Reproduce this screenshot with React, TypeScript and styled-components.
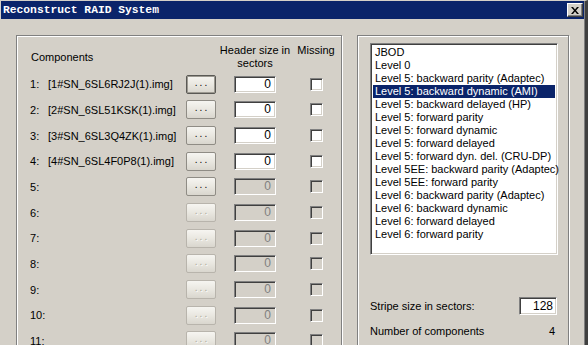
import React from "react"
import styled, { createGlobalStyle, css } from "styled-components"

const GlobalStyle = createGlobalStyle`
  html, body {
    margin: 0;
    padding: 0;
    background: #d4d0c8;
    overflow: hidden;
  }
  body {
    font-family: "Liberation Sans", Arial, sans-serif;
    font-size: 11px;
    color: #000;
  }
`

const sunken = css`
  border: 1px solid;
  border-color: #808080 #fff #fff #808080;
  box-shadow: inset 1px 1px 0 #404040, inset -1px -1px 0 #d4d0c8;
  box-sizing: border-box;
`

const Window = styled.div`
  width: 588px;
  height: 345px;
  box-sizing: border-box;
  border-top: 1px solid #d4d0c8;
  border-left: 1px solid #d4d0c8;
  border-right: 3px solid #404040;
  box-shadow: inset -1px 0 0 #808080;
  display: flex;
  flex-direction: column;
  overflow: hidden;
`

const TitleBar = styled.div`
  height: 18px;
  margin-right: 1px;
  background: #0a246a;
  display: flex;
  align-items: center;
  justify-content: space-between;
  padding: 0 1px 0 2px;
  flex-shrink: 0;
`

const Title = styled.span`
  color: #fff;
  font-family: "Liberation Mono", "DejaVu Sans Mono", monospace;
  font-weight: bold;
  font-size: 11.3px;
`

const CloseButton = styled.div`
  width: 16px;
  height: 14px;
  box-sizing: border-box;
  background: #d4d0c8;
  border: 1px solid;
  border-color: #fff #404040 #404040 #fff;
  box-shadow: inset -1px -1px 0 #808080;
  display: flex;
  align-items: center;
  justify-content: center;
`

const Body = styled.div`
  display: flex;
  gap: 15px;
  padding: 16px 0 0 15px;
`

const GroupBox = styled.div<{ $width: number }>`
  width: ${p => p.$width}px;
  height: 400px;
  flex-shrink: 0;
  box-sizing: border-box;
  border: 1px solid #808080;
  box-shadow: inset 1px 1px 0 #fff, 1px 1px 0 #fff;
`

const ComponentGrid = styled.div`
  display: grid;
  grid-template-columns: 18px 138px 30px 8px 62px 10px 40px;
  grid-template-rows: 27.5px;
  grid-auto-rows: 25.667px;
  align-items: center;
  padding: 8px 0 0 13px;
`

const ColumnHead = styled.div<{ $col: number }>`
  grid-column: ${p => p.$col};
  align-self: start;
  line-height: 13px;
  text-align: center;
  white-space: nowrap;
`

const WideHead = styled(ColumnHead)`
  margin: 0 -10px;
`

const Components = styled.div`
  grid-column: 1 / span 2;
  line-height: 13px;
  padding-left: 1px;
`

const RowNum = styled.div`
  grid-column: 1;
  white-space: nowrap;
`

const FileName = styled.div`
  grid-column: 2;
  white-space: nowrap;
`

const BrowseButton = styled.div<{ $default?: boolean; $disabled?: boolean }>`
  grid-column: 3;
  width: 30px;
  height: 19px;
  box-sizing: border-box;
  border-radius: 2px;
  border: 1px solid ${p => (p.$default ? "#5a5955" : p.$disabled ? "#b8b4ac" : "#8f8c85")};
  ${p => p.$default && "box-shadow: inset 0 0 0 1px #9c9991;"}
  background: linear-gradient(#f6f5f1, #e9e7e0 50%, #d9d6ce);
  display: flex;
  align-items: center;
  justify-content: center;
  letter-spacing: 2px;
  padding-left: 2px;
  padding-bottom: 3px;
  color: ${p => (p.$disabled ? "#aca899" : "#000")};
  ${p => p.$disabled && "text-shadow: 1px 1px 0 #fff;"}
  font-size: 10px;
  line-height: 10px;
`

const SizeField = styled.div<{ $disabled?: boolean }>`
  ${sunken}
  grid-column: 5;
  justify-self: center;
  width: 42px;
  height: 17px;
  background: ${p => (p.$disabled ? "#d4d0c8" : "#fff")};
  color: ${p => (p.$disabled ? "#808080" : "#000")};
  text-align: right;
  padding: 0 4px;
  line-height: 15px;
  font-size: 12px;
`

const CheckBox = styled.div<{ $disabled?: boolean }>`
  ${sunken}
  grid-column: 7;
  justify-self: center;
  width: 13px;
  height: 13px;
  background: ${p => (p.$disabled ? "#d4d0c8" : "#fff")};
`

const RightInner = styled.div`
  display: flex;
  flex-direction: column;
  padding: 7px 10px 0 12px;
`

const ListBox = styled.div`
  ${sunken}
  width: 188px;
  height: 212px;
  background: #fff;
  padding: 2px;
`

const ListItem = styled.div<{ $selected?: boolean }>`
  height: 13px;
  line-height: 13px;
  padding-left: 2px;
  white-space: nowrap;
  background: ${p => (p.$selected ? "#0a246a" : "transparent")};
  color: ${p => (p.$selected ? "#fff" : "#000")};
`

const FieldRow = styled.div<{ $top: number }>`
  display: flex;
  align-items: center;
  justify-content: space-between;
  margin-top: ${p => p.$top}px;
  width: 187px;
`

const StripeField = styled.div`
  ${sunken}
  width: 38px;
  height: 18px;
  background: #fff;
  text-align: right;
  padding: 0 3px;
  line-height: 16px;
  font-size: 12px;
`

const Count = styled.span`
  padding-right: 2px;
`

const files = [
  "[1#SN_6SL6RJ2J(1).img]",
  "[2#SN_6SL51KSK(1).img]",
  "[3#SN_6SL3Q4ZK(1).img]",
  "[4#SN_6SL4F0P8(1).img]",
]

const levels = [
  "JBOD",
  "Level 0",
  "Level 5: backward parity (Adaptec)",
  "Level 5: backward dynamic (AMI)",
  "Level 5: backward delayed (HP)",
  "Level 5: forward parity",
  "Level 5: forward dynamic",
  "Level 5: forward delayed",
  "Level 5: forward dyn. del. (CRU-DP)",
  "Level 5EE: backward parity (Adaptec)",
  "Level 5EE: forward parity",
  "Level 6: backward parity (Adaptec)",
  "Level 6: backward dynamic",
  "Level 6: forward delayed",
  "Level 6: forward parity",
]

const CloseIcon = () => (
  <svg width="8" height="7" viewBox="0 0 8 7">
    <path d="M0 0h2l2 2.5L6 0h2L5 3.5 8 7H6L4 4.5 2 7H0l3-3.5z" fill="#000" />
  </svg>
)

export default function App() {
  const rows = Array.from({ length: 11 }, (_, i) => i + 1)

  return (
    <>
      <GlobalStyle />
      <Window>
        <TitleBar>
          <Title>Reconstruct RAID System</Title>
          <CloseButton>
            <CloseIcon />
          </CloseButton>
        </TitleBar>
        <Body>
          <GroupBox $width={326}>
            <ComponentGrid>
              <Components>Components</Components>
              <WideHead $col={5}>
                Header size in
                <br />
                sectors
              </WideHead>
              <ColumnHead $col={7}>Missing</ColumnHead>
              {rows.map(n => {
                const used = n <= files.length
                return (
                  <React.Fragment key={"row-" + n}>
                    <RowNum>{n}:</RowNum>
                    <FileName>{used ? files[n - 1] : ""}</FileName>
                    <BrowseButton $default={n === 1} $disabled={n > 5}>
                      ...
                    </BrowseButton>
                    <SizeField $disabled={!used}>0</SizeField>
                    <CheckBox $disabled={!used} />
                  </React.Fragment>
                )
              })}
            </ComponentGrid>
          </GroupBox>
          <GroupBox $width={212}>
            <RightInner>
              <ListBox>
                {levels.map((l, i) => (
                  <ListItem key={l} $selected={i === 3}>
                    {l}
                  </ListItem>
                ))}
              </ListBox>
              <FieldRow $top={42}>
                <span>Stripe size in sectors:</span>
                <StripeField>128</StripeField>
              </FieldRow>
              <FieldRow $top={10}>
                <span>Number of components</span>
                <Count>4</Count>
              </FieldRow>
            </RightInner>
          </GroupBox>
        </Body>
      </Window>
    </>
  )
}
